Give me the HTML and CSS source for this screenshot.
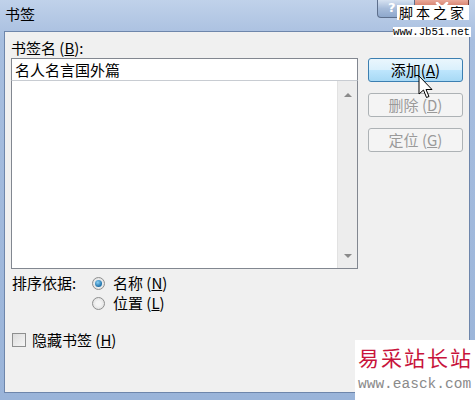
FILE: index.html
```html
<!DOCTYPE html>
<html lang="zh-CN">

<head>
    <meta charset="UTF-8">
    <title>书签</title>
    <link rel="stylesheet" href="styles.css">
</head>

<body>

    <div class="window">
        <!-- 标题栏 -->
        <div class="titlebar">
            <span class="title">书签</span>
            <div class="caption_btns">
                <div class="btn_help">?</div>
                <div class="btn_close">
                    <svg width="14" height="12" viewBox="0 0 14 12">
                        <path d="M2 1 L12 11 M12 1 L2 11" stroke="#fff" stroke-width="2.6" stroke-linecap="round" />
                    </svg>
                </div>
            </div>
        </div>

        <!-- 对话框内容 -->
        <div class="client">
            <div class="left">
                <div class="name_label">书签名 (<u>B</u>):</div>
                <div class="name_input">名人名言国外篇</div>
                <div class="list">
                    <div class="scrollbar">
                        <span class="arrow up"></span>
                        <span class="arrow down"></span>
                    </div>
                </div>
                <div class="sort">
                    <span class="sort_label">排序依据:</span>
                    <div class="radios">
                        <div class="radio_row"><span class="radio checked"></span>名称 (<u>N</u>)</div>
                        <div class="radio_row"><span class="radio"></span>位置 (<u>L</u>)</div>
                    </div>
                </div>
                <div class="check_row"><span class="checkbox"></span>隐藏书签 (<u>H</u>)</div>
            </div>

            <div class="right">
                <div class="btn hot">添加(<u>A</u>)</div>
                <div class="btn disabled">删除 (<u>D</u>)</div>
                <div class="btn disabled">定位 (<u>G</u>)</div>
            </div>
        </div>

        <!-- 水印 -->
        <div class="mark_top">
            <div class="mark_top_name">脚本之家</div>
            <div class="mark_top_url">www.Jb51.net</div>
        </div>
        <div class="mark_bottom">
            <div class="mark_bottom_name">易采站长站</div>
            <div class="mark_bottom_url">www.easck.com</div>
        </div>

        <!-- 鼠标指针 -->
        <svg class="cursor" width="16" height="25" viewBox="0 0 16 25">
            <path d="M1 1 L1 19 L5.5 15 L8.5 22.5 L11 21.5 L8 14.5 L14 14.5 Z" fill="#fff" stroke="#000" stroke-width="1" stroke-linejoin="round" />
        </svg>
    </div>

</body>

</html>
```

FILE: styles.css
```css
* {
    margin: 0;
    padding: 0;
    box-sizing: border-box;
}

body {
    font-family: "Noto Sans CJK SC", "Liberation Sans", sans-serif;
    font-size: 15px;
    color: #000;
    background: #fff;
}

u {
    text-decoration: underline;
    text-underline-offset: 1px;
}

.window {
    width: 475px;
    height: 400px;
    position: relative;
    display: flex;
    flex-direction: column;
    background: linear-gradient(#c0d2ea, #a7bedf 40px, #9ab4d9);
    overflow: hidden;
}

.titlebar {
    height: 31px;
    display: flex;
    align-items: flex-start;
    padding-left: 5px;
}

.titlebar .title {
    line-height: 20px;
    margin-top: 4px;
}

.caption_btns {
    margin-left: auto;
    margin-right: 6px;
    display: flex;
    height: 18px;
}

.btn_help {
    width: 38px;
    height: 18px;
    border: 1px solid #5d6f8c;
    border-top: 0;
    border-radius: 0 0 0 4px;
    background: linear-gradient(#d6e2f1, #a7bcda 50%, #8ea8cc);
    color: #fff;
    font-family: "DejaVu Sans", sans-serif;
    font-weight: bold;
    font-size: 13px;
    line-height: 16px;
    padding-left: 10px;
}

.btn_close {
    width: 54px;
    height: 18px;
    border: 1px solid #6b3a36;
    border-top: 0;
    border-left: 0;
    border-radius: 0 0 4px 0;
    background: linear-gradient(#e9a99a, #d0715c 50%, #c0432b);
    display: flex;
    justify-content: center;
    padding-top: 2px;
}

.client {
    flex: 1;
    margin: 0 5px 7px 4px;
    border: 1px solid #6e86ab;
    background: #f0f0f0;
    display: flex;
    padding: 6px 0 0 6px;
    column-gap: 10px;
}

.left {
    width: 347px;
}

.name_label {
    height: 20px;
    line-height: 20px;
}

.name_input {
    height: 23px;
    border: 1px solid #828790;
    background: #fff;
    line-height: 21px;
    padding-left: 3px;
}

.list {
    height: 189px;
    margin-top: -1px;
    border: 1px solid #828790;
    border-top-color: #c8ccd2;
    background: #fff;
    display: flex;
    justify-content: flex-end;
}

.scrollbar {
    width: 20px;
    background: #ededed;
    border-left: 1px solid #e2e2e2;
    display: flex;
    flex-direction: column;
    justify-content: space-between;
    align-items: center;
    padding: 12px 0 10px;
}

.arrow {
    width: 0;
    height: 0;
    border-left: 4px solid transparent;
    border-right: 4px solid transparent;
}

.arrow.up {
    border-bottom: 4px solid #8a8a8a;
}

.arrow.down {
    border-top: 4px solid #8a8a8a;
}

.sort {
    display: flex;
    margin-top: 4px;
}

.sort_label {
    width: 81px;
    line-height: 20px;
    padding-left: 1px;
}

.radio_row,
.check_row {
    display: flex;
    align-items: center;
    height: 20px;
    line-height: 20px;
    white-space: pre;
}

.radio {
    width: 13px;
    height: 13px;
    border-radius: 50%;
    border: 1px solid #8e8f8f;
    background: radial-gradient(circle, #f4f4f4 30%, #d8d8d8);
    margin-right: 8px;
    display: flex;
    align-items: center;
    justify-content: center;
}

.radio.checked::after {
    content: "";
    width: 7px;
    height: 7px;
    border-radius: 50%;
    background: radial-gradient(circle at 40% 35%, #8ad0f5, #1c6fa8 70%);
}

.check_row {
    margin-top: 17px;
    padding-left: 1px;
}

.checkbox {
    width: 14px;
    height: 14px;
    border: 1px solid #8e8f8f;
    background: linear-gradient(135deg, #dcdcdc, #f6f6f6);
    margin-right: 6px;
}

.right {
    width: 95px;
    margin-top: 20px;
    display: flex;
    flex-direction: column;
    row-gap: 11px;
}

.btn {
    height: 24px;
    border-radius: 3px;
    text-align: center;
    line-height: 22px;
    white-space: pre;
}

.btn.hot {
    border: 1px solid #3c7fb1;
    background: linear-gradient(#eaf6fd, #d9f0fc 50%, #bee6fd 50%, #a7d9f5);
}

.btn.disabled {
    border: 1px solid #adb2b5;
    background: #f4f4f4;
    color: #9a9a9a;
}

.mark_top {
    position: absolute;
    left: 393px;
    top: 5px;
    width: 78px;
}

.mark_top_name {
    margin-left: 4px;
    width: 72px;
    background: #fff;
    font-size: 14px;
    line-height: 15px;
    letter-spacing: 3px;
    padding-left: 2px;
    white-space: nowrap;
}

.mark_top_url {
    margin-top: 7px;
    background: #fff;
    font-family: "Liberation Mono", monospace;
    font-size: 10.7px;
    line-height: 10px;
    white-space: nowrap;
}

.mark_bottom {
    position: absolute;
    left: 355px;
    top: 340px;
    width: 120px;
    height: 60px;
    background: #fff;
    padding: 3px 0 0 3px;
}

.mark_bottom_name {
    color: #c8143c;
    font-size: 21px;
    line-height: 28px;
    letter-spacing: 2px;
    white-space: nowrap;
}

.mark_bottom_url {
    color: #8a8a8a;
    font-family: "Liberation Mono", monospace;
    font-size: 14.5px;
    line-height: 18px;
    margin-top: 4px;
    white-space: nowrap;
}

.cursor {
    position: absolute;
    left: 418px;
    top: 75px;
}
```
